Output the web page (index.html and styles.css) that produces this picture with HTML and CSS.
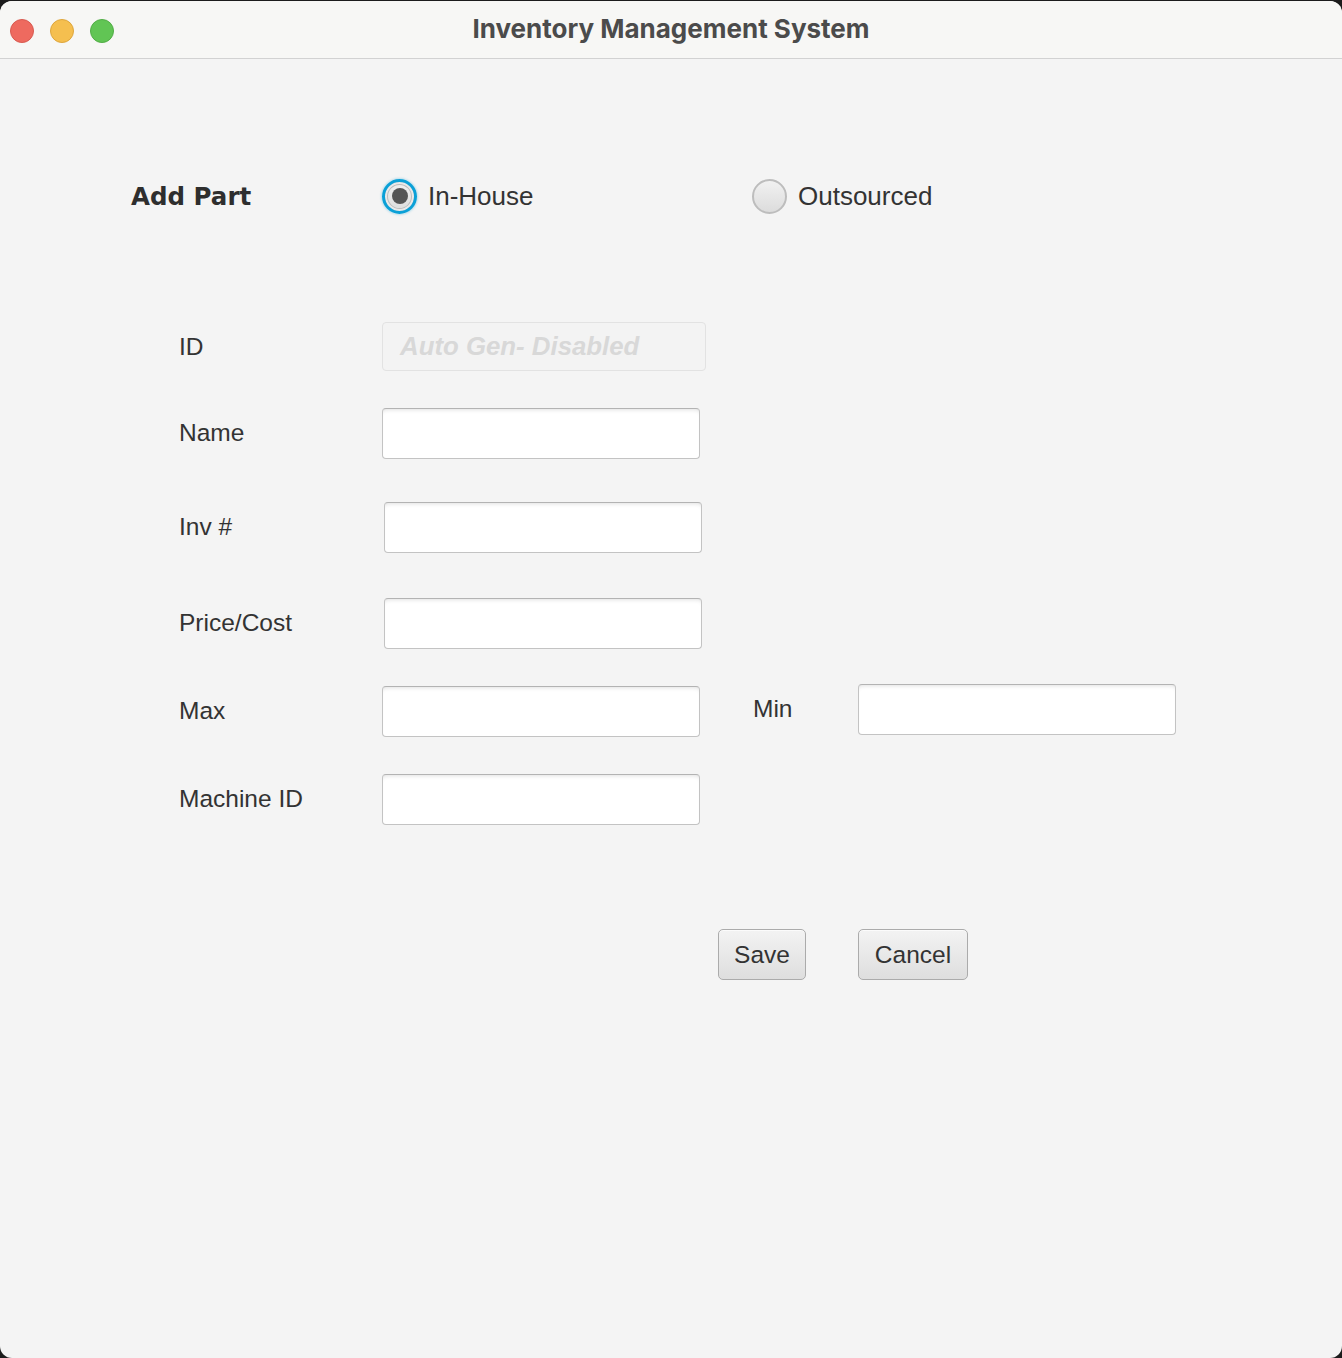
FILE: index.html
```html
<!DOCTYPE html>
<html lang="en">
<head>
<meta charset="utf-8">
<title>Inventory Management System</title>
<link rel="stylesheet" href="styles.css">
</head>
<body>
<div class="window">
  <header class="titlebar">
    <div class="lights">
      <span class="light red"></span>
      <span class="light yellow"></span>
      <span class="light green"></span>
    </div>
    <div class="title">Inventory Management System</div>
  </header>
  <main class="content">
    <div class="head-row">
      <div class="page-title">Add Part</div>
      <label class="radio-opt first">
        <span class="radio checked"></span>
        <span class="radio-text">In-House</span>
      </label>
      <label class="radio-opt">
        <span class="radio"></span>
        <span class="radio-text">Outsourced</span>
      </label>
    </div>

    <div class="form">
      <div class="lbl">ID</div>
      <div class="field disabled"><span class="ph">Auto Gen- Disabled</span></div>

      <div class="lbl">Name</div>
      <div class="field"></div>

      <div class="lbl">Inv #</div>
      <div class="field shift"></div>

      <div class="lbl">Price/Cost</div>
      <div class="field shift"></div>

      <div class="lbl">Max</div>
      <div class="field"></div>
      <div class="lbl min-lbl">Min</div>
      <div class="field up"></div>

      <div class="lbl">Machine ID</div>
      <div class="field"></div>
    </div>

    <div class="actions">
      <button class="btn save">Save</button>
      <button class="btn cancel">Cancel</button>
    </div>
  </main>
</div>
</body>
</html>
```
FILE: styles.css
```css
html, body {
  margin: 0;
  padding: 0;
  background: #1c1c1c;
}
body {
  width: 1342px;
  height: 1358px;
  overflow: hidden;
  padding-top: 1px;
  box-sizing: border-box;
}
.window {
  width: 1342px;
  height: 1357px;
  background: #f4f4f4;
  border-radius: 12px;
  overflow: hidden;
  font-family: "Liberation Sans", Arial, sans-serif;
  color: #333;
}
.titlebar {
  height: 57px;
  background: #f7f7f5;
  border-bottom: 1px solid #d2d2d2;
  display: flex;
  align-items: center;
  position: relative;
}
.lights {
  display: flex;
  gap: 16px;
  padding-left: 10px;
  padding-top: 2px;
}
.light {
  width: 24px;
  height: 24px;
  border-radius: 50%;
  box-sizing: border-box;
}
.red { background: #ee6a5f; border: 1px solid #d85a50; }
.yellow { background: #f5bf4f; border: 1px solid #dea63c; }
.green { background: #61c554; border: 1px solid #52ad46; }
.title {
  position: absolute;
  left: 0;
  right: 0;
  top: 0;
  bottom: 0;
  display: flex;
  align-items: center;
  justify-content: center;
  font-family: Inter, "Noto Sans", sans-serif;
  font-weight: 700;
  font-size: 26px;
  color: #4b4b4b;
  padding-bottom: 2px;
  padding-left: 0;
}
.content {
  display: flex;
  flex-direction: column;
}
.head-row {
  display: flex;
  align-items: center;
  height: 40px;
  margin-top: 117px;
  padding-left: 131px;
}
.page-title {
  width: 251px;
  font-family: "DejaVu Sans", sans-serif;
  font-weight: 700;
  font-size: 24.5px;
  color: #2e2e2e;
}
.radio-opt {
  display: flex;
  align-items: center;
  gap: 11px;
}
.radio-opt.first {
  width: 370px;
}
.radio-text {
  font-size: 26px;
  color: #333;
}
.radio {
  width: 35px;
  height: 35px;
  border-radius: 50%;
  box-sizing: border-box;
  border: 2px solid #bdbdbd;
  background: linear-gradient(#f1f1f1, #dcdcdc);
  position: relative;
}
.radio.checked {
  border: 3px solid #0aa0d7;
  box-shadow: 0 0 2px 1px rgba(10,160,215,0.25), inset 0 0 0 2px #e9e9e9, inset 0 0 0 3px #bcbcbc;
}
.radio.checked::after {
  content: "";
  position: absolute;
  left: 50%;
  top: 50%;
  width: 16px;
  height: 16px;
  margin: -8px 0 0 -8px;
  border-radius: 50%;
  background: #555;
}
.form {
  display: grid;
  grid-template-columns: 203px 324px 47px 105px 318px;
  grid-template-rows: 86px 94px 96px 88px 88px 51px;
  margin-top: 106px;
  padding-left: 179px;
  align-items: start;
}
.lbl {
  grid-column: 1;
  font-size: 24.5px;
  height: 51px;
  line-height: 51px;
  margin-top: -1px;
  color: #333;
}
.min-lbl {
  grid-column: 4;
  margin-top: -3px;
}
.field {
  grid-column: 2;
  width: 318px;
  height: 51px;
  box-sizing: border-box;
  background: #fff;
  border: 1px solid #c3c3c3;
  border-top-color: #b3b3b3;
  border-radius: 4px;
  box-shadow: inset 0 4px 4px -3px rgba(0,0,0,0.12);
}
.field.shift {
  margin-left: 2px;
}
.field.up {
  grid-column: 5;
  margin-top: -2px;
}
.field.disabled {
  width: 324px;
  height: 49px;
  background: #f3f3f3;
  border: 1px solid #e2e2e2;
  box-shadow: none;
  display: flex;
  align-items: center;
  padding-left: 17px;
}
.ph {
  font-weight: 700;
  font-style: italic;
  font-size: 25.8px;
  color: #d8d8d8;
}
.actions {
  display: flex;
  gap: 52px;
  margin-top: 104px;
  padding-left: 718px;
}
.btn {
  height: 51px;
  box-sizing: border-box;
  font-family: "Liberation Sans", Arial, sans-serif;
  font-size: 24.5px;
  color: #333;
  background: linear-gradient(#f3f3f3, #dedede);
  border: 1px solid #ababab;
  border-radius: 5px;
  box-shadow: inset 0 1px 0 #fbfbfb;
  padding: 0;
}
.save { width: 88px; }
.cancel { width: 110px; }
```
